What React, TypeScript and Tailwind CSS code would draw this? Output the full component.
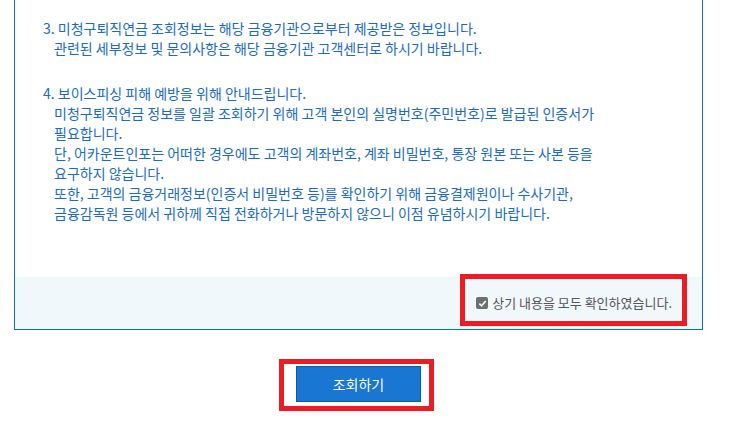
import React from "react";

export default function App() {
  const font = { fontFamily: '"Noto Sans CJK KR", "Noto Sans", sans-serif' };
  return (
    <div className="w-[739px] h-[428px] bg-white overflow-hidden" style={font}>
      <div className="ml-[14px] w-[689px] border-x border-b border-[#0a6fc2]">
        <div className="h-[277px] pt-[18px] pl-[28px] text-[14px] leading-[20px] text-[#1a6cc0]">
          <div>
            <div>3. 미청구퇴직연금 조회정보는 해당 금융기관으로부터 제공받은 정보입니다.</div>
            <div className="pl-[11px]">관련된 세부정보 및 문의사항은 해당 금융기관 고객센터로 하시기 바랍니다.</div>
          </div>
          <div className="mt-[25px]">
            <div>4. 보이스피싱 피해 예방을 위해 안내드립니다.</div>
            <div className="pl-[11px]">
              <div>미청구퇴직연금 정보를 일괄 조회하기 위해 고객 본인의 실명번호(주민번호)로 발급된 인증서가</div>
              <div>필요합니다.</div>
              <div>단, 어카운트인포는 어떠한 경우에도 고객의 계좌번호, 계좌 비밀번호, 통장 원본 또는 사본 등을</div>
              <div>요구하지 않습니다.</div>
              <div>또한, 고객의 금융거래정보(인증서 비밀번호 등)를 확인하기 위해 금융결제원이나 수사기관,</div>
              <div>금융감독원 등에서 귀하께 직접 전화하거나 방문하지 않으니 이점 유념하시기 바랍니다.</div>
            </div>
          </div>
        </div>
        <div className="relative h-[52px] bg-[#f0f8fc] flex items-center justify-end pr-[30px]">
          <label className="flex items-center gap-[4px] text-[13px] text-[#555555]">
            <span className="w-[12px] h-[12px] rounded-[2px] bg-[#6e6e6e] flex items-center justify-center">
              <svg width="9" height="9" viewBox="0 0 10 10">
                <path d="M1.5 5.2 L4 7.6 L8.6 2.2" stroke="white" strokeWidth="1.8" fill="none" />
              </svg>
            </span>
            <span>상기 내용을 모두 확인하였습니다.</span>
          </label>
          <div className="absolute left-[445px] top-[-3px] w-[227px] h-[52px] border-[5px] border-[#ec1c24]" />
        </div>
      </div>
      <div className="ml-[14px] w-[689px] flex justify-center mt-[36px]">
        <div className="relative">
          <button className="w-[125px] h-[36px] bg-[#1976d2] border border-[#0b5aa3] text-white text-[14px] flex items-center justify-center">
            조회하기
          </button>
          <div className="absolute left-[-17px] top-[-7px] w-[155px] h-[52px] border-[5px] border-[#ec1c24]" />
        </div>
      </div>
    </div>
  );
}
